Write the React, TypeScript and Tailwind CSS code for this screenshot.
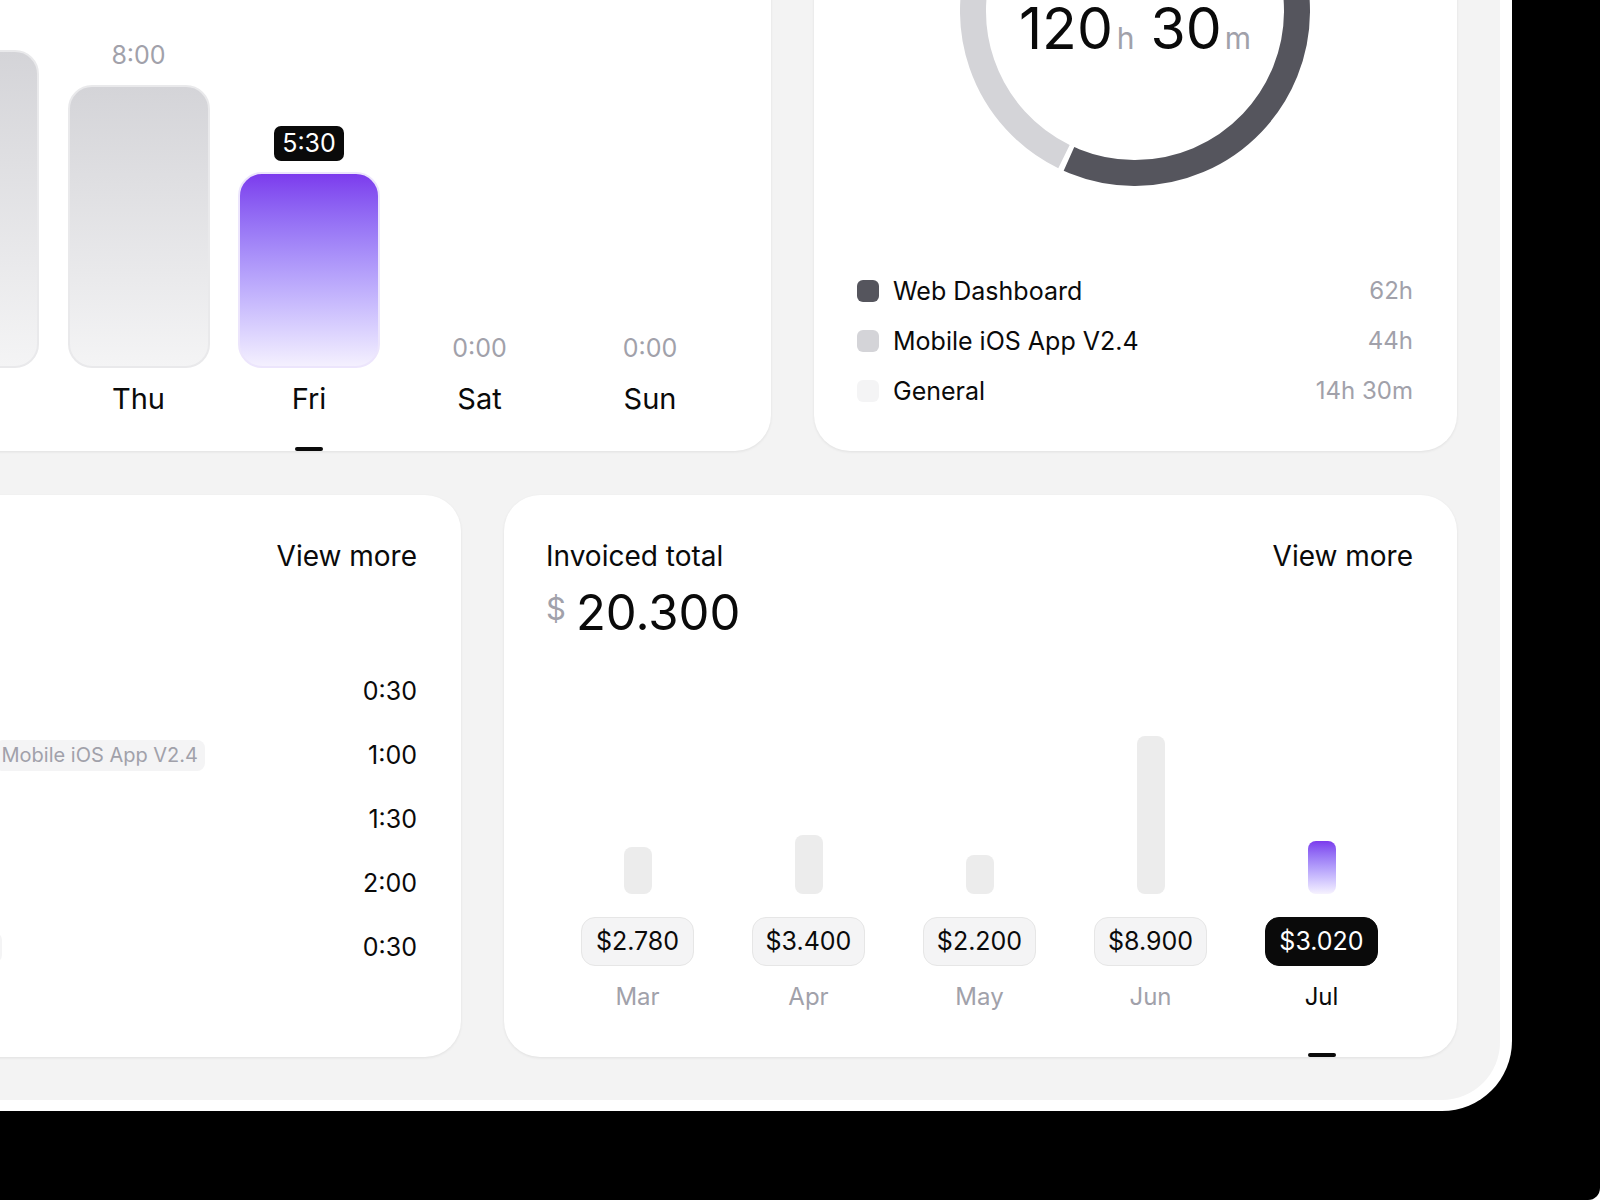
import React from 'react'

type Day = { day: string; label: string; h: number; active?: boolean }

const days: Day[] = [
  { day: 'Mon', label: '6:30', h: 230 },
  { day: 'Tue', label: '7:00', h: 248 },
  { day: 'Wed', label: '9:00', h: 318 },
  { day: 'Thu', label: '8:00', h: 283 },
  { day: 'Fri', label: '5:30', h: 196, active: true },
  { day: 'Sat', label: '0:00', h: 0 },
  { day: 'Sun', label: '0:00', h: 0 },
]

const months = [
  { m: 'Mar', v: '$2.780', h: 47 },
  { m: 'Apr', v: '$3.400', h: 59 },
  { m: 'May', v: '$2.200', h: 39 },
  { m: 'Jun', v: '$8.900', h: 158 },
  { m: 'Jul', v: '$3.020', h: 53, active: true },
]

const legend = [
  { name: 'Web Dashboard', value: '62h', color: 'bg-[#55555d]' },
  { name: 'Mobile iOS App V2.4', value: '44h', color: 'bg-[#d4d4d8]' },
  { name: 'General', value: '14h 30m', color: 'bg-[#f4f4f5]' },
]

const C = 2 * Math.PI * 162

function Donut() {
  const seg = (start: number, deg: number, color: string) => (
    <circle
      cx="175"
      cy="175"
      r="162"
      fill="none"
      stroke={color}
      strokeWidth="26"
      strokeDasharray={`${(deg / 360) * C} ${C}`}
      transform={`rotate(${start} 175 175)`}
    />
  )
  return (
    <div className="relative h-[350px] w-[350px]">
      <svg width="350" height="350" viewBox="0 0 350 350">
        {seg(-68, 182, '#55555d')}
        {seg(116, 130, '#d4d4d8')}
        {seg(248, 41, '#f4f4f5')}
      </svg>
      <div className="absolute inset-0 flex items-center justify-center pt-[34px]">
        <div className="flex items-baseline text-[#0a0a0a]">
          <span className="text-[57px] leading-none">120</span>
          <span className="ml-[4px] text-[30px] leading-none text-[#a1a1aa]">h</span>
          <span className="ml-[16px] text-[57px] leading-none">30</span>
          <span className="ml-[3px] text-[30px] leading-none text-[#a1a1aa]">m</span>
        </div>
      </div>
    </div>
  )
}

function DayColumn({ d }: { d: Day }) {
  return (
    <div className="flex w-[142px] flex-none flex-col items-center">
      {d.active ? (
        <div className="mb-[11px] h-[35px] rounded-[7px] bg-[#0a0a0a] px-[8px] text-[25px] leading-[35px] text-white">
          {d.label}
        </div>
      ) : (
        <div className={`text-[25px] leading-[30px] text-[#a1a1aa] ${d.h > 0 ? 'mb-[15px]' : 'mb-[5px]'}`}>
          {d.label}
        </div>
      )}
      {d.h > 0 && (
        <div
          className={
            d.active
              ? 'w-full rounded-[24px] border-2 border-[#ece5fc] bg-linear-to-b from-[#7c3aed] to-[#f4f0fe]'
              : 'w-full rounded-[24px] border-2 border-[#e9e9eb] bg-linear-to-b from-[#d4d4d8] to-[#f4f4f5]'
          }
          style={{ height: d.h }}
        />
      )}
      <div className="mt-[14px] text-[29px] leading-[34px] text-[#0a0a0a]">{d.day}</div>
      <div className={`mt-[31px] h-[4px] w-[28px] rounded-full ${d.active ? 'bg-[#0a0a0a]' : 'bg-transparent'}`} />
    </div>
  )
}

export default function App() {
  return (
    <div className="h-[1200px] w-[1600px] bg-white font-[Inter,sans-serif]">
      <div className="h-full w-full overflow-hidden rounded-br-[12px] bg-black">
        <div className="h-[1111px] w-[1512px] rounded-br-[70px] bg-white pb-[11px] pr-[12px]">
          <div className="flex h-full w-full flex-col items-end justify-end gap-[44px] overflow-hidden rounded-br-[58px] bg-[#f3f3f3] pb-[43px] pr-[43px]">
            {/* top row */}
            <div className="flex h-[700px] flex-none gap-[43px]">
              <div className="flex h-full w-[1300px] flex-none items-end justify-end gap-[28.5px] rounded-[36px] bg-white pr-[50px] shadow-[0_1px_3px_rgba(0,0,0,0.08)]">
                {days.map((d) => (
                  <DayColumn key={d.day} d={d} />
                ))}
              </div>
              <div className="flex h-full w-[643px] flex-none flex-col justify-end rounded-[36px] bg-white pb-[45px] pl-[43px] pr-[44px] shadow-[0_1px_3px_rgba(0,0,0,0.08)]">
                <div className="flex justify-center">
                  <Donut />
                </div>
                <div className="mt-[90px] flex flex-col gap-[20px]">
                  {legend.map((l) => (
                    <div key={l.name} className="flex h-[30px] items-center">
                      <div className={`h-[22px] w-[22px] rounded-[6px] ${l.color}`} />
                      <span className="ml-[14px] text-[25px] leading-[30px] text-[#0a0a0a]">{l.name}</span>
                      <span className="ml-auto text-[24px] leading-[30px] text-[#a1a1aa]">{l.value}</span>
                    </div>
                  ))}
                </div>
              </div>
            </div>

            {/* bottom row */}
            <div className="flex h-[562px] flex-none gap-[43px]">
              <div className="flex h-full w-[900px] flex-none flex-col rounded-[36px] bg-white pl-[44px] pr-[44px] pt-[44px] shadow-[0_1px_3px_rgba(0,0,0,0.08)]">
                <div className="flex justify-end text-[28px] leading-[34px] text-[#0a0a0a]">View more</div>
                <div className="mt-[86px] flex flex-col">
                  {[
                    { t: '0:30' },
                    { t: '1:00', pill: 'Mobile iOS App V2.4', mr: 'mr-[132px]' },
                    { t: '1:30' },
                    { t: '2:00' },
                    { t: '0:30', pill: 'Web Dashboard', mr: 'mr-[335px]' },
                  ].map((r, i) => (
                    <div key={i} className="flex h-[64px] items-center justify-end">
                      {r.pill && (
                        <div className={`h-[31px] rounded-[8px] bg-[#f4f4f5] px-[7px] text-[20px] leading-[31px] text-[#a1a1aa] ${r.mr}`}>
                          {r.pill}
                        </div>
                      )}
                      <div className="w-[80px] text-right text-[25px] leading-[32px] text-[#0a0a0a]">{r.t}</div>
                    </div>
                  ))}
                </div>
              </div>

              <div className="flex h-full w-[953px] flex-none flex-col rounded-[36px] bg-white pl-[42px] pr-[44px] pt-[44px] shadow-[0_1px_3px_rgba(0,0,0,0.08)]">
                <div className="flex justify-between text-[28px] leading-[34px] text-[#0a0a0a]">
                  <span>Invoiced total</span>
                  <span>View more</span>
                </div>
                <div className="mt-[15px] flex items-start">
                  <span className="mt-[5px] text-[31px] leading-none text-[#a1a1aa]">$</span>
                  <span className="ml-[10px] text-[49px] leading-none text-[#0a0a0a]">20.300</span>
                </div>
                <div className="flex flex-1 items-end justify-between px-[35px]">
                  {months.map((m) => (
                    <div key={m.m} className="flex w-[113px] flex-col items-center">
                      <div
                        className={
                          m.active
                            ? 'w-[28px] rounded-[8px] bg-linear-to-b from-[#7c3aed] to-[#f6f2fe]'
                            : 'w-[28px] rounded-[8px] bg-[#ececec]'
                        }
                        style={{ height: m.h }}
                      />
                      <div
                        className={
                          m.active
                            ? 'mt-[23px] h-[49px] w-full rounded-[14px] border-[1.5px] border-[#0a0a0a] bg-[#0a0a0a] text-center text-[25px] leading-[46px] text-white'
                            : 'mt-[23px] h-[49px] w-full rounded-[14px] border-[1.5px] border-[#e6e6e6] bg-[#f4f4f5] text-center text-[25px] leading-[46px] text-[#0a0a0a]'
                        }
                      >
                        {m.v}
                      </div>
                      <div className={`mt-[16px] text-[24px] leading-[30px] ${m.active ? 'text-[#0a0a0a]' : 'text-[#a1a1aa]'}`}>
                        {m.m}
                      </div>
                      <div className={`mt-[41px] h-[4px] w-[28px] rounded-full ${m.active ? 'bg-[#0a0a0a]' : 'bg-transparent'}`} />
                    </div>
                  ))}
                </div>
              </div>
            </div>
          </div>
        </div>
      </div>
    </div>
  )
}
